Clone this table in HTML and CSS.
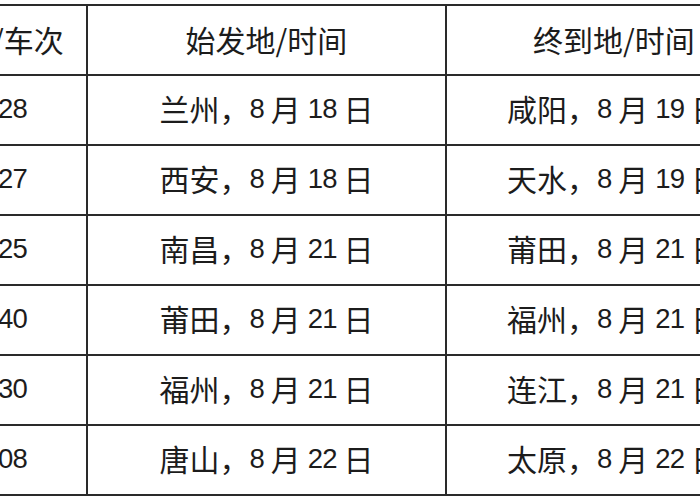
FILE: index.html
```html
<!DOCTYPE html>
<html lang="zh-CN">
<head>
<meta charset="utf-8">
<title>行程表</title>
<link rel="stylesheet" href="styles.css">
</head>
<body>
<div class="sheet">
  <div class="grid">
    <div class="cell head">航班/车次</div>
    <div class="cell head">始发地/时间</div>
    <div class="cell head">终到地/时间</div>

    <div class="cell"><span class="n">1228</span></div>
    <div class="cell">兰州，<span class="n">8 </span>月<span class="n"> 18 </span>日</div>
    <div class="cell">咸阳，<span class="n">8 </span>月<span class="n"> 19 </span>日</div>

    <div class="cell"><span class="n">1227</span></div>
    <div class="cell">西安，<span class="n">8 </span>月<span class="n"> 18 </span>日</div>
    <div class="cell">天水，<span class="n">8 </span>月<span class="n"> 19 </span>日</div>

    <div class="cell"><span class="n">2325</span></div>
    <div class="cell">南昌，<span class="n">8 </span>月<span class="n"> 21 </span>日</div>
    <div class="cell">莆田，<span class="n">8 </span>月<span class="n"> 21 </span>日</div>

    <div class="cell"><span class="n">3340</span></div>
    <div class="cell">莆田，<span class="n">8 </span>月<span class="n"> 21 </span>日</div>
    <div class="cell">福州，<span class="n">8 </span>月<span class="n"> 21 </span>日</div>

    <div class="cell"><span class="n">6630</span></div>
    <div class="cell">福州，<span class="n">8 </span>月<span class="n"> 21 </span>日</div>
    <div class="cell">连江，<span class="n">8 </span>月<span class="n"> 21 </span>日</div>

    <div class="cell"><span class="n">2608</span></div>
    <div class="cell">唐山，<span class="n">8 </span>月<span class="n"> 22 </span>日</div>
    <div class="cell">太原，<span class="n">8 </span>月<span class="n"> 22 </span>日</div>
  </div>
</div>
</body>
</html>
```
FILE: styles.css
```css
html, body {
  margin: 0;
  padding: 0;
  background: #ffffff;
  overflow: hidden;
}

.sheet {
  width: 700px;
  height: 500px;
  overflow: hidden;
  padding-top: 4px;
  box-sizing: border-box;
}

.grid {
  display: grid;
  grid-template-columns: 176px 357px 334px;
  grid-auto-rows: 68px;
  gap: 2px;
  padding: 2px;
  background: #2a2a2a;
  width: max-content;
  margin-left: -92px;
}

.cell {
  background: #ffffff;
  display: flex;
  align-items: center;
  justify-content: center;
  font-family: "Noto Sans CJK SC", sans-serif;
  font-size: 30px;
  line-height: 1;
  color: #1c1c1c;
  white-space: pre;
  padding-bottom: 4px;
  box-sizing: border-box;
}

.head {
  padding-bottom: 2px;
}

.n {
  font-family: "Liberation Sans", sans-serif;
  font-size: 27.5px;
  letter-spacing: -0.8px;
  position: relative;
  top: 1px;
}
```
